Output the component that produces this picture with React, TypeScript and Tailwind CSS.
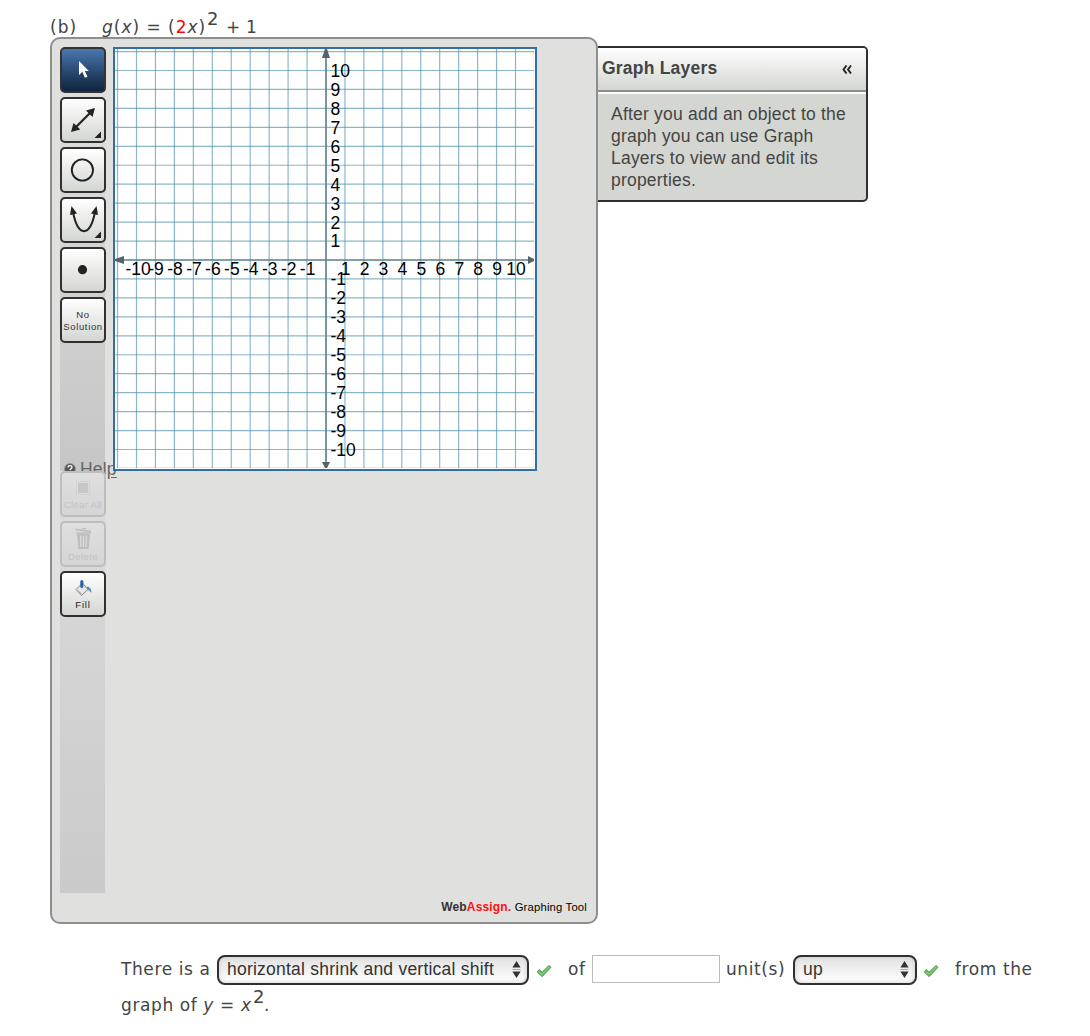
import React from "react";

const ORIGIN = 211;
const UNIT = 18.95;
const ticks = Array.from({ length: 23 }, (_, i) => i - 11);
const labels = ticks.filter((n) => n !== 0 && Math.abs(n) <= 10);

interface ToolButtonProps {
  label: string;
  active?: boolean;
  disabled?: boolean;
  children: React.ReactNode;
}

const ToolButton: React.FC<ToolButtonProps> = ({ label, active, disabled, children }) => (
  <button
    type="button"
    aria-label={label}
    disabled={disabled}
    className={`relative z-10 block h-[46px] w-[46px] shrink-0 rounded-[5px] border-2
      ${
        active
          ? "border-[#333] bg-linear-to-b from-[#4a78ae] to-[#0e2440]"
          : disabled
          ? "border-[#bebebe] bg-linear-to-b from-[#dfdfdf] to-[#d5d5d5]"
          : "border-[#303030] bg-linear-to-b from-white to-[#d4d6d2]"
      }
    `}
  >
    {children}
  </button>
);

const Icon: React.FC<{ children: React.ReactNode }> = ({ children }) => (
  <svg width="42" height="42" viewBox="0 0 42 42" className="block">
    {children}
  </svg>
);

const Graph = () => (
  <div className="relative z-10 h-[424px] w-[424px] shrink-0 border-2 border-[#336fa3] bg-white">
    <svg width="420" height="420" viewBox="0 0 420 420" className="block">
      {ticks.map((n) => {
        const p = ORIGIN + n * UNIT;
        return (
          <g key={n} stroke="#458aaa" strokeOpacity="0.62" strokeWidth="1.2">
            <line x1={p} x2={p} y1="0" y2="419" />
            <line x1="0" x2="419" y1={p} y2={p} />
          </g>
        );
      })}
      <path d="M419.500 0v420M0 419.500h420" stroke="#fff" />
      <g stroke="#638389" strokeWidth="1.7" strokeOpacity="0.9">
        <line x1={ORIGIN} x2={ORIGIN} y1="0" y2="419" />
        <line x1="0" x2="419" y1={ORIGIN} y2={ORIGIN} />
      </g>
      <g fill="#566469">
        <path d="M210 0h2l3 9h-8z" />
        <path d="M210 419h2l3-6h-8z" />
        <path d="M0 210v2l9 3v-8z" />
        <path d="M419 210v2l-6 3v-8z" />
      </g>
      <g fill="#000" fontFamily='"Liberation Sans", Arial, sans-serif' fontSize="17.5">
        {labels.map((n) => (
          <text key={`x${n}`} x={ORIGIN + n * UNIT + (n === -10 ? 1.6 : 0.6)} y="226" textAnchor="middle">
            {n}
          </text>
        ))}
        {labels.map((n) => (
          <text key={`y${n}`} x="215.5" y={ORIGIN - n * UNIT + 6.4}>
            {n}
          </text>
        ))}
      </g>
    </svg>
  </div>
);

const CheckMark = () => (
  <svg width="16" height="14" viewBox="0 0 16 14" className="block">
    <path d="M1 7.7 3.4 5.5 6 8.2 13 1.5 15 3.3 6.2 12.7z" fill="#69bd62" stroke="#4a984a" strokeWidth="0.9" />
    <path d="M2.6 7.4 6 10.3 13.2 2.9" fill="none" stroke="#8bd382" strokeWidth="1" />
  </svg>
);

const SelectBox: React.FC<{ value: string; className: string }> = ({ value, className }) => (
  <div
    className={`flex h-[30px] shrink-0 items-center justify-between rounded-[8px] border-2 border-[#303030] bg-linear-to-b from-[#e2e2e2] to-white pr-[6px] pl-[8px] shadow-[inset_0_0_5px_#ccc] ${className}`}
  >
    <span className="pb-[2px] font-['Liberation_Sans',Arial,sans-serif] text-[17.5px] leading-[24px] tracking-[0.23px] whitespace-nowrap text-[#333]">
      {value}
    </span>
    <svg width="9" height="17" viewBox="0 0 9 17" className="mb-px block">
      <path d="M4.5 0 8.6 6.5H.4zM4.5 17 8.6 10.5H.4z" fill="#333" />
      <path d="M.5 8.5h8" stroke="#aaa" />
    </svg>
  </div>
);

export default function App() {
  return (
    <main className="h-[1036px] w-[1090px] overflow-hidden bg-white font-['DejaVu_Sans',Verdana,sans-serif] text-[17px] tracking-[0.6px] text-[#444]">
      {/* Question */}
      <div className="flex h-[37px] pt-[15px] pl-[50px] leading-[24px] whitespace-nowrap">
        <span className="w-[52px] tracking-[1px]">(b)</span>
        <span className="w-[105px] tracking-[0.98px]">
          <i>g</i>(<i>x</i>) = (<span className="text-[#f00]">2</span>
          <i>x</i>)
        </span>
        <span className="-mt-[8px] w-[19px] text-[18px]">2</span>
        <span className="tracking-[0.2px]">+ 1</span>
      </div>

      <div className="flex pl-[50px] tracking-normal">
        {/* Graphing tool */}
        <section className="flex h-[887px] w-[548px] shrink-0 flex-col rounded-[10px] border-2 border-[#8e8e8e] bg-[#e0e0de] pt-[8px] pl-[8px]">
          <div className="flex h-[424px] gap-[8px]">
            <div className="relative flex w-[45px] flex-col gap-1 bg-linear-to-b from-[#e0e0de] to-[#c6c6c6]">
              <ToolButton label="Select" active>
                <Icon>
                  <path d="M17 12v14l3.3-3.2 2.6 6 2.6-1.1-2.7-5.6h4z" fill="#fff" />
                </Icon>
              </ToolButton>
              <ToolButton label="Line">
                <Icon>
                  <path d="M13 29 29 13" stroke="#222" strokeWidth="2.2" />
                  <path d="M9 33 18.3 30.500 11.500 24zM33 9 30.500 18 24 11.500zM39 32.500v6.500h-6.500z" fill="#222" />
                </Icon>
              </ToolButton>
              <ToolButton label="Circle">
                <Icon>
                  <circle cx="20.4" cy="21" r="10.6" fill="none" stroke="#222" strokeWidth="1.9" />
                </Icon>
              </ToolButton>
              <ToolButton label="Parabola">
                <Icon>
                  <path d="M11 13C16 38.500 28 38.500 33 13" fill="none" stroke="#222" strokeWidth="2" />
                  <path d="M9.500 7 15 14.500 8 16zM34.500 7 36 16 29 14.500zM39 32.500v6.500h-6.500z" fill="#222" />
                </Icon>
              </ToolButton>
              <ToolButton label="Point">
                <Icon>
                  <circle cx="20.5" cy="20.700" r="4.600" fill="#222" />
                </Icon>
              </ToolButton>
              <ToolButton label="No Solution">
                <span className="block pt-px text-center font-['Liberation_Sans',Arial,sans-serif] text-[9.5px] leading-[12px] tracking-[0.65px] text-[#333]">
                  No
                  <br />
                  Solution
                </span>
              </ToolButton>
              <a className="absolute top-[412px] left-[4px] flex h-[20px] items-center font-['Liberation_Sans',Arial,sans-serif] text-[17.5px] tracking-[0.2px] text-[#666]">
                <svg width="12" height="12" viewBox="0 0 12 12" className="mr-[4px] block">
                  <circle cx="6" cy="6" r="5.5" fill="#555" stroke="#999" />
                  <path d="M4 4.500C4 2 8 2 8 4.300 8 6 6 5.500 6 7.300M6 8.500v1.200" fill="none" stroke="#fff" strokeWidth="1.3" />
                </svg>
                <span className="underline underline-offset-[2px]">Help</span>
              </a>
            </div>
            <Graph />
          </div>
          <div className="flex h-[422px] w-[45px] flex-col gap-1 bg-linear-to-b from-[#dcdcdc] to-[#cacaca]">
            <ToolButton label="Clear All" disabled>
              <span className="flex h-[42px] flex-col items-center justify-end pb-[4px] font-['Liberation_Sans',Arial,sans-serif] text-[9.5px] leading-[12px] tracking-[0.3px] whitespace-nowrap text-[#c2c2c2]">
                <svg width="14" height="14" viewBox="0 0 14 14" className="mb-[4px] block">
                  <rect x=".5" y=".5" width="13" height="13" fill="none" stroke="#c8c8c8" strokeDasharray="1 1" />
                  <rect x="2" y="2" width="10" height="10" fill="#c7c7c7" />
                </svg>
                Clear All
              </span>
            </ToolButton>
            <ToolButton label="Delete" disabled>
              <span className="flex h-[42px] flex-col items-center justify-end pb-[2px] font-['Liberation_Sans',Arial,sans-serif] text-[9.5px] leading-[12px] tracking-[0.4px] text-[#c2c2c2]">
                <svg width="17" height="21" viewBox="0 0 17 21" className="mb-[2px] block">
                  <path d="M0 1.500 16 3.500M7 0l4 1M1 5h15" stroke="#bdbdbd" strokeWidth="1.500" />
                  <path d="M2 6h13l-1.500 15h-10z" fill="#bdbdbd" />
                  <path d="M5.500 7.500 6 19M8.500 7.500V19M11.500 7.500 11 19" stroke="#dedede" strokeWidth="1.200" />
                </svg>
                Delete
              </span>
            </ToolButton>
            <ToolButton label="Fill">
              <span className="flex h-[42px] flex-col items-center justify-end pb-[4px] font-['Liberation_Sans',Arial,sans-serif] text-[9.5px] leading-[12px] tracking-[0.8px] text-[#222]">
                <svg width="17" height="17" viewBox="0 0 17 17" className="mb-[2px] block">
                  <path d="M1 9.500 7.500 3 13 9.500 6.500 15.500z" fill="#e5e5e5" stroke="#888" />
                  <path d="M3 10.500 6.500 14" stroke="#aaa" />
                  <path d="M11 7c3-1 5.500 1 5.500 6-2-2-3-3-4-3z" fill="#5c96bd" />
                  <path d="M6.800 1.500v5" stroke="#2463aa" strokeWidth="3" strokeLinecap="round" />
                </svg>
                Fill
              </span>
            </ToolButton>
          </div>
          <footer className="mt-[6px] mr-[9px] text-right font-['Liberation_Sans',Arial,sans-serif] text-[11.3px] leading-[16px] tracking-[0.17px] text-black">
            <b className="text-[12px] text-[#333]">
              Web<span className="text-[#f11]">Assign.</span>
            </b>{" "}
            Graphing Tool
          </footer>
        </section>

        {/* Layers */}
        <aside className="mt-[9px] h-[156px] w-[270px] rounded-r-[5px] border-2 border-l-0 border-[#303030] bg-[#d4d6d1] font-['Liberation_Sans',Arial,sans-serif] text-[17.5px] tracking-[0.21px] text-[#444]">
          <header className="flex h-[44px] items-center justify-between rounded-tr-[3px] border-b-2 border-[#8e8e8e] bg-linear-to-b from-white to-[#d4d6d2] pr-[14px] pb-[2px] pl-[4px]">
            <b className="leading-[20px]">Graph Layers</b>
            <svg width="10" height="9" viewBox="0 0 10 9" className="mt-[3px] block">
              <path d="M4.500.5 1.500 4.500 4.500 8.500M9 .5 6 4.500 9 8.500" fill="none" stroke="#222" strokeWidth="1.900" />
            </svg>
          </header>
          <p className="border-t-2 border-white pt-[9px] pl-[13px] leading-[22px] whitespace-nowrap">
            After you add an object to the
            <br />
            graph you can use Graph
            <br />
            Layers to view and edit its
            <br />
            properties.
          </p>
        </aside>
      </div>

      {/* Answer */}
      <div className="mt-[31px] flex h-[30px] pl-[121px] leading-[28px] whitespace-nowrap">
        <span className="w-[96px]">There is a</span>
        <SelectBox value="horizontal shrink and vertical shift" className="w-[312px]" />
        <span className="mt-[9px] ml-[7px] w-[32px]">
          <CheckMark />
        </span>
        <span className="w-[24px]">of</span>
        <input aria-label="Units" className="h-[28px] w-[128px] border border-[#bbb] bg-white" />
        <span className="ml-[6px] w-[67px]">unit(s)</span>
        <SelectBox value="up" className="w-[124px]" />
        <span className="mt-[9px] ml-[6px] w-[32px]">
          <CheckMark />
        </span>
        <span>from the</span>
      </div>
      <div className="flex pt-[8px] pl-[121px] leading-[24px] whitespace-nowrap">
        <span className="w-[132px]">
          graph of <i>y</i> = <i>x</i>
        </span>
        <span className="-mt-[8px] w-[11px] text-[18px] tracking-normal">2</span>
        <span>.</span>
      </div>
    </main>
  );
}
